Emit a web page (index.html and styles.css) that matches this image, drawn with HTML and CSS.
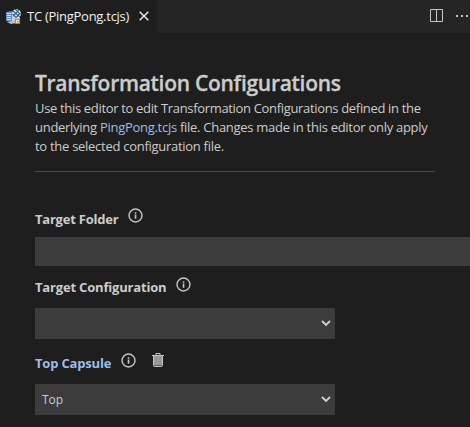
FILE: index.html
```html
<!DOCTYPE html>
<html lang="en">
<head>
<meta charset="utf-8">
<title>TC (PingPong.tcjs)</title>
<link rel="stylesheet" href="styles.css">
</head>
<body>
<svg width="0" height="0" class="defs">
  <symbol id="info" viewBox="0 0 16 16"><circle cx="8" cy="8" r="6.9" fill="none" stroke="currentColor" stroke-width="1.5"/><path d="M7.2 4.5h1.7v1.5H7.2zM7.2 7h1.7v4.5H7.2z" fill="currentColor"/></symbol>
</svg>
<header class="tabbar">
  <div class="tab">
    <svg class="file-icon" width="16" height="16" viewBox="0 0 16 16">
      <path d="M5 3l9 3v8H5z" fill="#c9cbd8"/>
      <path d="M0 3l6-1v11l-6-1z" fill="#5d8ac0"/>
      <path d="M1 4.5h4M1 6.5h4M1 8.5h4M1 10.5h4" stroke="#d5e4f5"/>
      <path d="M1 13l5-1 4 2-5 1z" fill="#b9bdd0"/>
      <circle cx="10.5" cy="4.7" r="4.5" fill="#d9edf5"/>
      <path d="M7 2l7 6M9 0l5 5M6.5 5l4 4M13 1L7 7M14.5 4l-4 4" stroke="#356384" stroke-width="1.1"/>
      <path d="M9.5 10.5h4v4h-4z" fill="#fff0c0" stroke="#b88a30" stroke-width="1.2"/>
      <path d="M11 12h1.5v1.5H11z" fill="#c58c18"/>
    </svg>
    <span class="tab-title">TC (PingPong.tcjs)</span>
    <svg class="close" width="10" height="10" viewBox="0 0 10 10"><path d="M.7.7l8.6 8.6M9.3.7L.7 9.3" stroke="#f0f0f0" stroke-width="1.4"/></svg>
  </div>
  <div class="actions">
    <svg width="14" height="13" viewBox="0 0 14 13"><path d="M.5.5h12v12H.5zM6.5.5v12" fill="none" stroke="#c5c5c5"/></svg>
    <svg width="14" height="2" viewBox="0 0 14 2"><path d="M0 0h2v2H0zM5 0h2v2H5zM10 0h2v2h-2z" fill="#c5c5c5"/></svg>
  </div>
</header>
<main class="editor">
  <h1>Transformation Configurations</h1>
  <p class="intro"><span class="line line-a">Use this editor to edit Transformation Configurations defined in the</span>
  <span class="line">underlying <a>PingPong.tcjs</a> file. Changes made in this editor only apply</span>
  <span class="line">to the selected configuration file.</span></p>
  <hr>
  <div class="label first"><span class="folder">Target Folder</span><svg class="info"><use href="#info"/></svg></div>
  <div class="field wide"></div>
  <div class="label second"><span class="config">Target Configuration</span><svg class="info"><use href="#info"/></svg></div>
  <div class="field select"><svg class="chevron" viewBox="0 0 10 7"><path d="M1 1l4 4 4-4"/></svg></div>
  <div class="label third"><span class="capsule">Top Capsule</span><svg class="info"><use href="#info"/></svg>
    <svg class="trash" width="12" height="14" viewBox="0 0 12 14"><path d="M1.5 3h9v9.5h-9z" fill="#999"/><path d="M0 2.5h12M4 2V.5h4V2M1.5 3v9.5q0 1 1 1h7q1 0 1-1V3" fill="none" stroke="#c5c5c5"/></svg></div>
  <div class="field select"><span class="value">Top</span><svg class="chevron" viewBox="0 0 10 7"><path d="M1 1l4 4 4-4"/></svg></div>
</main>
</body>
</html>
```
FILE: styles.css
```css
* { box-sizing: border-box; }
body { margin: 0; width: 470px; height: 427px; overflow: hidden; background: #1e1e1e; color: #cccccc; font-family: "Open Sans", "Noto Sans", sans-serif; font-size: 13px; }
svg { display: block; flex: none; }
.defs { position: absolute; }
.tabbar { height: 33px; display: flex; justify-content: space-between; background: #252526; }
.tab { width: 157px; height: 33px; display: flex; align-items: center; background: #1e1e1e; color: #f0f0f0; padding-left: 6px; }
.tab-title { width: 104px; margin-left: 5px; padding-bottom: 1px; white-space: nowrap; font-size: 13px; letter-spacing: -.27px; }
.close { margin-left: 8px; margin-bottom: 1px; }
.actions { display: flex; align-items: center; gap: 12px; width: 40px; padding-bottom: 2px; }
.editor { padding: 38px 0 0 35px; }
h1 { margin: 0; height: 28px; line-height: 25px; font-size: 21px; font-weight: 600; letter-spacing: -.28px; white-space: nowrap; -webkit-text-stroke: .3px currentColor; }
.intro { margin: 0; letter-spacing: -.28px; }
.line { display: block; height: 19px; line-height: 19px; white-space: nowrap; }
.line-a { letter-spacing: -.33px; }
a { color: #9dbde8; }
hr { width: 400px; height: 1px; border: 0; margin: 15px 0 0; background: #4b4b4b; }
.label { display: flex; align-items: flex-start; font-weight: 700; font-size: 13px; letter-spacing: -.18px; line-height: 18px; white-space: nowrap; }
.label > span { margin-top: 1px; flex: none; }
.info { width: 15px; height: 15px; color: #c5c5c5; }
.first { height: 29px; margin-top: 36px; }
.first > span { margin-top: 2px; }
.second { height: 31px; margin-top: 11px; }
.third { height: 31px; margin-top: 14px; }
.folder { width: 93px; letter-spacing: -.22px; }
.config { width: 141px; }
.capsule { width: 86px; color: #9dbde8; }
.trash { margin-left: 16px; }
.field { background: #3c3c3c; }
.wide { height: 29px; width: 435px; }
.select { width: 300px; height: 31px; display: flex; align-items: center; padding: 0 4px 0 7px; font-size: 12px; }
.chevron { width: 10px; height: 7px; margin-left: auto; }
.chevron path { fill: none; stroke: #d0d0d0; stroke-width: 1.8; }
```
